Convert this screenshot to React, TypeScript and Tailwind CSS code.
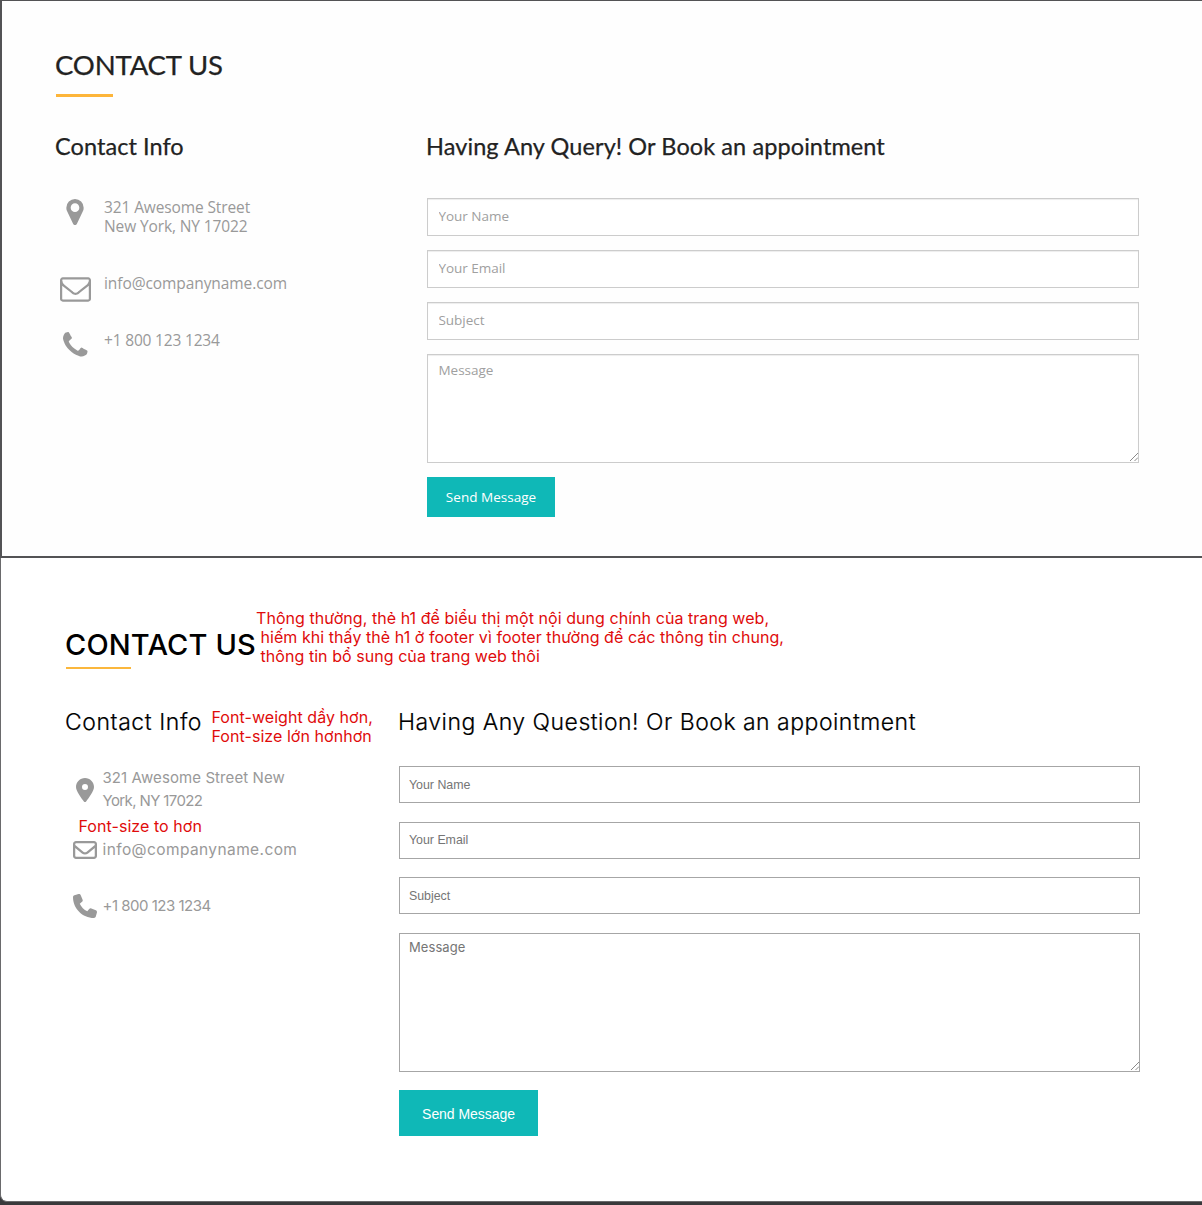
import React from "react";
import { FaLocationDot, FaPhone, FaRegEnvelope } from "react-icons/fa6";

const PinIcon = () => (
  <svg className="h-[26px] w-[18px]" viewBox="0 128 1024 1536" fill="currentColor">
    <path d="M768 640q0-106-75-181t-181-75-181 75-75 181 75 181 181 75 181-75 75-181zm256 0q0 109-33 179l-364 774q-16 33-47.5 52t-67.5 19-67.5-19-46.5-52l-365-774q-33-70-33-179 0-212 150-362t362-150 362 150 150 362z" />
  </svg>
);

const MailIcon = () => (
  <svg className="h-[25px] w-[31px]" viewBox="0 256 1792 1408" fill="currentColor">
    <path d="M1664 1504v-768q-32 36-69 66-268 206-426 338-51 43-83 67t-86.5 48.5-102.5 24.5h-2q-48 0-102.5-24.5t-86.5-48.5-83-67q-158-132-426-338-37-30-69-66v768q0 13 9.500 22.500t22.500 9.500h1472q13 0 22.500-9.500t9.500-22.500zm0-1051v-24.500l-.5-13-3-12.500-5.500-9-9-7.500-14-2.500h-1472q-13 0-22.500 9.500t-9.500 22.500q0 168 147 284 193 152 401 317 6 5 35 29.500t46 37.500 44.500 31.500 50.500 27.500 43 9h2q20 0 43-9t50.500-27.500 44.500-31.500 46-37.500 35-29.500q208-165 401-317 54-43 100.500-115.500t46.500-131.500zm128-37v1088q0 66-47 113t-113 47h-1472q-66 0-113-47t-47-113v-1088q0-66 47-113t113-47h1472q66 0 113 47t47 113z" />
  </svg>
);

const PhoneIcon = () => (
  <svg className="size-[24.5px]" viewBox="192 128 1408 1408" fill="currentColor">
    <path d="M1600 1240q0 27-10 70.500t-21 68.500q-21 50-122 106-94 51-186 51-27 0-53-3.500t-57.500-12.500-47-14.500-55.500-20.500-49-18q-98-35-175-83-127-79-264-216t-216-264q-48-77-83-175-3-9-18-49t-20.500-55.500-14.500-47-12.500-57.500-3.500-53q0-92 51-186 56-101 106-122 25-11 68.500-21t70.500-10q14 0 21 3 18 6 53 76 11 19 30 54t35 63.500 31 53.500q3 4 17.500 25t21.500 35.500 7 28.500q0 20-28.500 50t-62 55-62 53-28.500 46q0 9 5 22.500t8.500 20.500 14 24 11.500 19q76 137 174 235t235 174q2 1 19 11.500t24 14 20.500 8.500 22.500 5q18 0 46-28.500t53-62 55-62 50-28.500q14 0 28.500 7t35.500 21.500 25 17.500q25 15 53.500 31t63.500 35 54 30q70 35 76 53 3 7 3 21z" />
  </svg>
);

const Grip = () => (
  <svg className="absolute right-[1px] bottom-[2px] size-[8px]" viewBox="0 0 8 8" stroke="#8a8a8a" strokeWidth="1">
    <path d="M0 8L8 0M4.500 8L8 4.500" />
  </svg>
);

const topField =
  "block w-full h-[38px] border border-[#ccc] bg-white px-[10.5px] pb-[2px] text-[13.5px] tracking-[-0.03px] text-[#555] shadow-[inset_0_1px_1px_rgba(0,0,0,0.075)] placeholder:text-[#a0a0a0] placeholder:opacity-100 outline-none";
const bottomField =
  "block w-full h-[37px] border border-[#a6a6a6] bg-white px-[9px] font-['Liberation_Sans',sans-serif] text-[12.4px] tracking-[-0.02px] placeholder:text-[#757575] placeholder:opacity-100 outline-none";

function Original() {
  return (
    <section className="h-[558px] border-t border-l-2 border-b-2 border-[#535355] bg-[#fefefe] pl-[54px] pr-[63px] pt-[46px] font-['Open_Sans',sans-serif]">
      <h1 className="-ml-px h-[47px] font-['Lato',sans-serif] text-[27.5px] leading-[36px] tracking-[-0.16px] text-[#222] [-webkit-text-stroke:0.25px_#222]">CONTACT US</h1>
      <div className="h-[3px] w-[57px] bg-[#fdb53a]" />
      <div className="flex pt-[33px]">
        <div className="w-[371px] shrink-0">
          <h2 className="-ml-px font-['Lato',sans-serif] text-[23.5px] leading-[33px] tracking-[0.06px] text-[#222] [-webkit-text-stroke:0.25px_#222]">Contact Info</h2>
          <div className="pt-[35px] text-[15.5px] leading-[19px] text-[#999]">
            <div className="flex h-[76px]">
              <div className="flex w-[48px] shrink-0 pt-[1px] pl-[10px]"><PinIcon /></div>
              <p className="tracking-[-0.12px]">321 Awesome Street<br />New York, NY 17022</p>
            </div>
            <div className="flex h-[57px]">
              <div className="flex w-[48px] shrink-0 pt-[3px] pl-[4px]"><MailIcon /></div>
              <p className="tracking-[-0.08px]">info@companyname.com</p>
            </div>
            <div className="flex">
              <div className="flex w-[48px] shrink-0 pt-[1px] pl-[7px]"><PhoneIcon /></div>
              <p className="tracking-[-0.18px]">+1 800 123 1234</p>
            </div>
          </div>
        </div>
        <div className="min-w-0 flex-1">
          <h2 className="-ml-px whitespace-nowrap font-['Lato',sans-serif] text-[23.5px] leading-[33px] tracking-[0.09px] text-[#222] [-webkit-text-stroke:0.25px_#222]">Having Any Query! Or Book an appointment</h2>
          <form className="pt-[35px]">
            <div className="grid gap-[14px]">
              <input className={topField} placeholder="Your Name" />
              <input className={topField} placeholder="Your Email" />
              <input className={topField} placeholder="Subject" />
              <div className="relative">
                <textarea className="block h-[109px] w-full resize-none border border-[#ccc] bg-white px-[10.5px] pt-[6px] text-[13.5px] leading-[19px] tracking-[-0.03px] shadow-[inset_0_1px_1px_rgba(0,0,0,0.075)] outline-none placeholder:text-[#a0a0a0] placeholder:opacity-100" placeholder="Message" />
                <Grip />
              </div>
            </div>
            <button type="button" className="mt-[14px] block h-[40px] w-[128px] bg-[#0fb8b7] text-[13.5px] tracking-[0.02px] text-white">Send Message</button>
          </form>
        </div>
      </div>
    </section>
  );
}

function Remake() {
  return (
    <section className="h-[644px] rounded-bl-[7px] border-b border-l border-[#6a6a6c] bg-white pl-[65px] pr-[62px] pt-[67px] font-['Inter',sans-serif]">
      <h1 className="-ml-px h-[42px] text-[29px] leading-[40px] font-medium tracking-[0.14px] text-black">CONTACT US</h1>
      <div className="h-[2px] w-[65px] bg-[#fbb73c]" />
      <div className="flex pt-[36px]">
        <div className="w-[333px] shrink-0">
          <h2 className="-ml-px text-[23px] leading-[34px] font-light tracking-[0.56px] text-black [-webkit-text-stroke:0.2px_#000]">Contact Info</h2>
          <div className="pt-[27px] text-[15px] leading-[23px] text-[#999]">
            <div className="flex h-[72px]">
              <div className="w-[36.500px] shrink-0 pt-[12px] pl-[6.5px]"><FaLocationDot className="size-[24px]" /></div>
              <p><span className="tracking-[0.09px]">321 Awesome Street New</span><br /><span className="tracking-[-0.62px]">York, NY 17022</span></p>
            </div>
            <div className="flex h-[56px]">
              <div className="w-[36.500px] shrink-0 pl-[6.5px]"><FaRegEnvelope className="size-[24px]" /></div>
              <p className="text-[15.5px] tracking-[0.4px]">info@companyname.com</p>
            </div>
            <div className="flex">
              <div className="w-[36.500px] shrink-0 pl-[6.5px]"><FaPhone className="size-[24px]" /></div>
              <p className="tracking-[-0.49px]">+1 800 123 1234</p>
            </div>
          </div>
        </div>
        <div className="min-w-0 flex-1">
          <h2 className="-ml-px whitespace-nowrap text-[23px] leading-[34px] font-light tracking-[0.49px] text-black [-webkit-text-stroke:0.2px_#000]">Having Any Question! Or Book an appointment</h2>
          <form className="pt-[27px]">
            <div className="grid gap-[18.500px]">
              <input className={bottomField} placeholder="Your Name" />
              <input className={bottomField} placeholder="Your Email" />
              <input className={bottomField} placeholder="Subject" />
              <div className="relative">
                <textarea className="block h-[139px] w-full resize-none border border-[#a6a6a6] bg-white px-[9px] pt-[4px] text-[13px] leading-[19px] tracking-[0.08px] outline-none placeholder:text-[#757575] placeholder:opacity-100" placeholder="Message" />
                <Grip />
              </div>
            </div>
            <button type="button" className="mt-[18px] block h-[46px] w-[139px] bg-[#0fb8b7] pt-[3px] font-['Liberation_Sans',sans-serif] text-[14px] tracking-[-0.05px] text-white">Send Message</button>
          </form>
        </div>
      </div>
    </section>
  );
}

const note = "absolute whitespace-pre font-['Inter',sans-serif] text-[16px] leading-[19px] tracking-[0.055px] text-[#e00b0b]";

export default function App() {
  return (
    <main className="relative h-[1205px] w-[1202px] overflow-hidden bg-[#39393b]">
      <Original />
      <Remake />
      <p className={`${note} top-[609px] left-[256px]`}>
        Thông thường, thẻ h1 để biểu thị một nội dung chính của trang web,<br />
        <span className="pl-[4.5px]">hiếm khi thấy thẻ h1 ở footer vì footer thường để các thông tin chung,</span><br />
        <span className="pl-[4.5px]">thông tin bổ sung của trang web thôi</span>
      </p>
      <p className={`${note} top-[708px] left-[211.5px]`}>Font-weight dầy hơn,<br />Font-size lớn hơnhơn</p>
      <p className={`${note} top-[817px] left-[78.5px]`}>Font-size to hơn</p>
    </main>
  );
}
